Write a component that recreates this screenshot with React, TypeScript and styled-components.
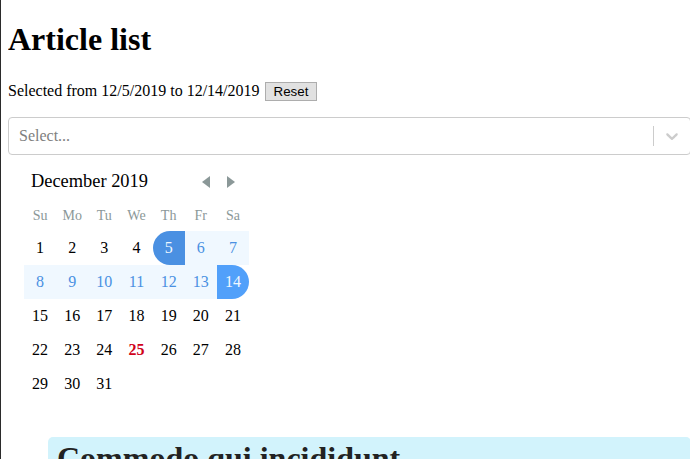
import React from "react";
import styled, { createGlobalStyle, css } from "styled-components";

const GlobalStyle = createGlobalStyle`
  body {
    margin: 0 8px 8px;
    font-family: "Liberation Serif", "Times New Roman", serif;
    font-size: 16px;
    color: #000;
    background: #fff;
  }
  body::before {
    content: "";
    position: fixed;
    left: 0;
    top: 0;
    bottom: 0;
    width: 1px;
    background: #2b2b2b;
  }
`;

const Title = styled.h1`
  font-size: 32px;
  font-weight: bold;
  margin: 21.44px 0;
`;

const Summary = styled.p`
  margin: 16px 0;
  line-height: 21px;
`;

const ResetButton = styled.button`
  font-family: "Liberation Sans", Arial, sans-serif;
  font-size: 13.33px;
  padding: 1px 8px;
  margin-left: 1px;
  background: #e1e1e1;
  border: 1px solid #adadad;
  border-radius: 0;
  color: #000;
  vertical-align: baseline;
`;

const Control = styled.div`
  display: flex;
  align-items: center;
  min-height: 38px;
  box-sizing: border-box;
  border: 1px solid #ccc;
  border-radius: 4px;
  background: #fff;
  margin-right: -1px;
`;

const Placeholder = styled.div`
  flex: 1;
  padding: 2px 10px;
  color: #808080;
`;

const Separator = styled.span`
  align-self: stretch;
  width: 1px;
  margin: 8px 0;
  background: #ccc;
`;

const Indicator = styled.div`
  display: flex;
  padding: 8px;
  color: #ccc;
`;

const Picker = styled.div`
  display: inline-block;
  padding: 16px 16px 16px;
`;

const Caption = styled.div`
  display: flex;
  align-items: center;
  justify-content: space-between;
  padding: 0 13px 0 7px;
  margin-bottom: 9.2px;
  font-size: 18.4px;
  line-height: 21px;
`;

const Nav = styled.div`
  display: flex;
  gap: 15px;
  padding-top: 2px;
`;

const DayGrid = styled.div`
  display: grid;
  grid-template-columns: repeat(7, 32.15px);
`;

const Weekday = styled.div`
  text-align: center;
  font-size: 14px;
  line-height: 16px;
  padding: 7px 0;
  color: #8b9898;
`;

type Kind = "plain" | "start" | "end" | "middle" | "today";

const Day = styled.div<{ $kind: Kind }>`
  text-align: center;
  height: 34px;
  line-height: 34px;
  ${({ $kind }) =>
    $kind === "middle" &&
    css`
      background: #f0f8ff;
      color: #4a90e2;
    `}
  ${({ $kind }) =>
    $kind === "start" &&
    css`
      background: #4a90e2;
      color: #f0f8ff;
      border-radius: 17px 0 0 17px;
    `}
  ${({ $kind }) =>
    $kind === "end" &&
    css`
      background: #51a0fa;
      color: #f0f8ff;
      border-radius: 0 17px 17px 0;
    `}
  ${({ $kind }) =>
    $kind === "today" &&
    css`
      color: #d0021b;
      font-weight: bold;
    `}
`;

const List = styled.ul`
  list-style: none;
  margin: 20px 0 0;
  padding: 0 0 0 40px;
`;

const Card = styled.li`
  background: #d2f3fc;
  border-radius: 5px;
  padding: 3px 9px 12px;
  margin-right: -1px;
`;

const CardTitle = styled.h2`
  margin: 0;
  font-size: 32px;
  font-weight: bold;
  color: #222;
`;

const Arrow = ({ dir }: { dir: "left" | "right" }) => (
  <svg width="10" height="12" viewBox="0 0 10 12">
    {dir === "left" ? (
      <path d="M9 0 L9 12 L1 6 Z" fill="#8b9898" />
    ) : (
      <path d="M1 0 L1 12 L9 6 Z" fill="#8b9898" />
    )}
  </svg>
);

const kindOf = (d: number): Kind => {
  if (d === 5) return "start";
  if (d === 14) return "end";
  if (d > 5 && d < 14) return "middle";
  if (d === 25) return "today";
  return "plain";
};

export default function App() {
  const weekdays = ["Su", "Mo", "Tu", "We", "Th", "Fr", "Sa"];
  const days = Array.from({ length: 31 }, (_, i) => i + 1);

  return (
    <>
      <GlobalStyle />
      <Title>Article list</Title>
      <Summary>
        Selected from 12/5/2019 to 12/14/2019 <ResetButton>Reset</ResetButton>
      </Summary>
      <Control>
        <Placeholder>Select...</Placeholder>
        <Separator />
        <Indicator>
          <svg height="20" width="20" viewBox="0 0 20 20" fill="currentColor">
            <path d="M4.516 7.548c0.436-0.446 1.043-0.481 1.576 0l3.908 3.747 3.908-3.747c0.533-0.481 1.141-0.446 1.574 0 0.436 0.445 0.408 1.197 0 1.615-0.406 0.418-4.695 4.502-4.695 4.502-0.217 0.223-0.502 0.335-0.787 0.335s-0.57-0.112-0.789-0.335c0 0-4.287-4.084-4.695-4.502s-0.436-1.17 0-1.615z" />
          </svg>
        </Indicator>
      </Control>
      <Picker>
        <Caption>
          <span>December 2019</span>
          <Nav>
            <Arrow dir="left" />
            <Arrow dir="right" />
          </Nav>
        </Caption>
        <DayGrid>
          {weekdays.map((w) => (
            <Weekday key={w}>{w}</Weekday>
          ))}
          {days.map((d) => (
            <Day key={d} $kind={kindOf(d)}>
              {d}
            </Day>
          ))}
        </DayGrid>
      </Picker>
      <List>
        <Card>
          <CardTitle>Commodo qui incididunt</CardTitle>
        </Card>
      </List>
    </>
  );
}
